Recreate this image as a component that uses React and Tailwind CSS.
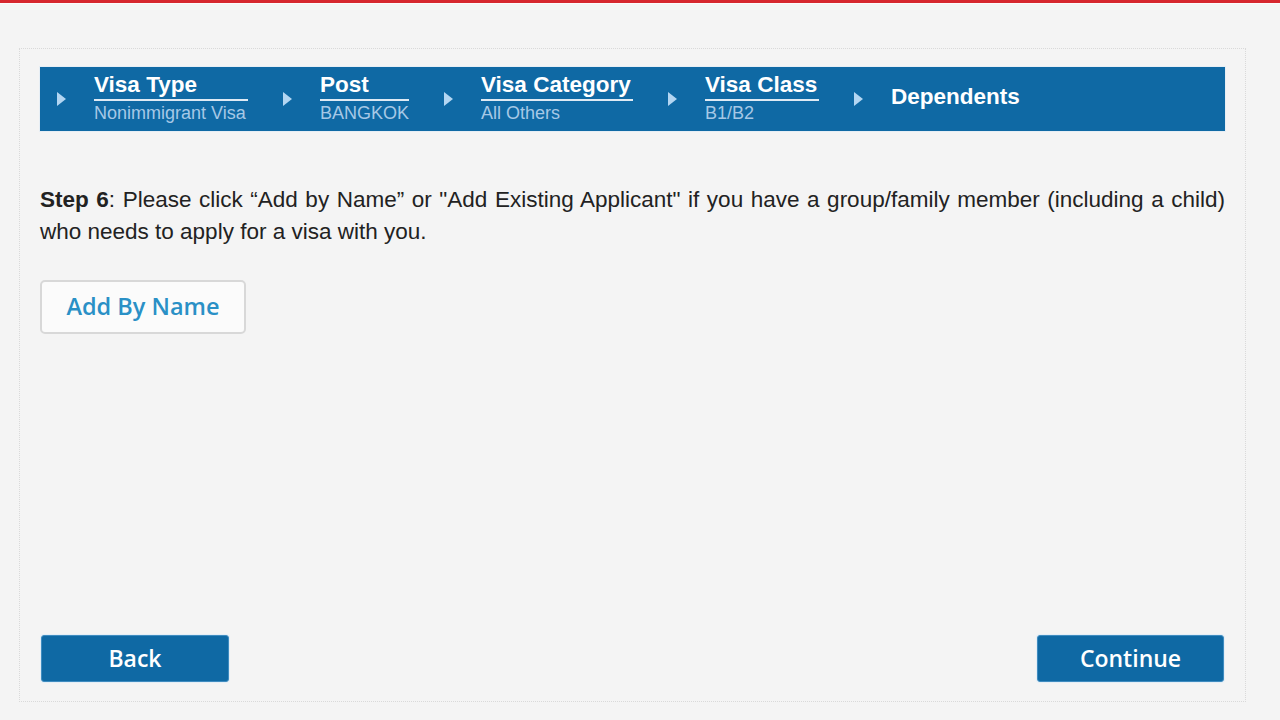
import React from "react";

const steps = [
  { title: "Visa Type", sub: "Nonimmigrant Visa", w: "w-[154px]" },
  { title: "Post", sub: "BANGKOK", w: "w-[89px]" },
  { title: "Visa Category", sub: "All Others", w: "w-[152px]" },
  { title: "Visa Class", sub: "B1/B2", w: "w-[114px]" },
];

function Arrow() {
  return (
    <svg width="9" height="14" viewBox="0 0 9 14" className="shrink-0">
      <polygon points="0,0 9,7 0,14" fill="#b3d6f2" />
    </svg>
  );
}

export default function App() {
  return (
    <div className="w-[1280px] h-[720px] bg-[#f4f4f4] overflow-hidden" style={{ fontFamily: '"Liberation Sans", Arial, sans-serif' }}>
      <div className="h-[3px] bg-[#d6262d]" />
      <div className="h-[1px] bg-[#fbfbfb]" />
      <div className="ml-[19px] mt-[44px] w-[1227px] h-[654px] border border-dotted border-[#d9d9d9] flex flex-col px-[20px] pt-[18px] pb-[19px]">
        <div className="h-[64px] bg-[#0f69a4] flex items-center pl-[17px] shadow-[0_0_0_1px_#e6eef5]">
          {steps.map((s, i) => (
            <div key={i} className="flex items-center">
              <Arrow />
              <div className={`ml-[28px] mr-[35px] mb-[4px] ${s.w} flex flex-col`}>
                <div className="text-white font-bold text-[22.5px] leading-[29px] border-b-2 border-[#dfeaf4] whitespace-nowrap">{s.title}</div>
                <div className="text-[#a6c8e6] text-[18px] leading-[24px] whitespace-nowrap">{s.sub}</div>
              </div>
            </div>
          ))}
          <div className="flex items-center">
            <Arrow />
            <div className="ml-[28px] text-white font-bold text-[22.5px] leading-[27px] -mt-[5px]">Dependents</div>
          </div>
        </div>

        <p className="mt-[53px] text-[22.5px] leading-[32px] text-[#222] text-justify">
          <span className="font-bold">Step 6</span>: Please click “Add by Name” or "Add Existing Applicant" if you have a group/family member (including a child) who needs to apply for a visa with you.
        </p>

        <div className="mt-[32px]">
          <button className="w-[206px] h-[54px] rounded-[5px] border-2 border-[#d8d8d8] bg-[#fbfbfb] text-[#2a90c6] text-[23.5px] font-semibold" style={{ fontFamily: '"Open Sans", sans-serif' }}>
            Add By Name
          </button>
        </div>

        <div className="flex-1" />

        <div className="flex justify-between items-end">
          <button className="ml-[1px] w-[188px] h-[47px] rounded-[3px] bg-[#0f69a4] border border-[#3f8cc0] text-white text-[23px] font-semibold shadow-[0_0_0_1px_#e4eef6]" style={{ fontFamily: '"Open Sans", sans-serif' }}>
            Back
          </button>
          <button className="mr-[1px] w-[187px] h-[47px] rounded-[3px] bg-[#0f69a4] border border-[#3f8cc0] text-white text-[23px] font-semibold shadow-[0_0_0_1px_#e4eef6]" style={{ fontFamily: '"Open Sans", sans-serif' }}>
            Continue
          </button>
        </div>
      </div>
    </div>
  );
}
